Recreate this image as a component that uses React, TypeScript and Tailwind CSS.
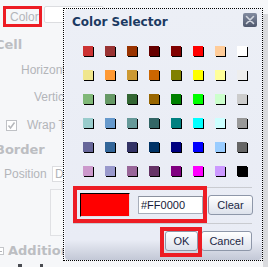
import React from 'react'

const swatches: string[][] = [
  ['bg-[#cc3333]', 'bg-[#993333]', 'bg-[#993300]', 'bg-[#660000]', 'bg-[#800000]', 'bg-[#ff0000]', 'bg-[#ffcc99]', 'bg-[#ffffff]'],
  ['bg-[#f0e68c]', 'bg-[#ff9933]', 'bg-[#cc9933]', 'bg-[#cc6600]', 'bg-[#808000]', 'bg-[#ffff00]', 'bg-[#ffff99]', 'bg-[#eeeeee]'],
  ['bg-[#80b878]', 'bg-[#669966]', 'bg-[#336633]', 'bg-[#996600]', 'bg-[#008000]', 'bg-[#00ff00]', 'bg-[#ccffcc]', 'bg-[#cccccc]'],
  ['bg-[#99cccc]', 'bg-[#6699cc]', 'bg-[#669999]', 'bg-[#336666]', 'bg-[#008080]', 'bg-[#00ffff]', 'bg-[#ccffff]', 'bg-[#999999]'],
  ['bg-[#666699]', 'bg-[#336699]', 'bg-[#333366]', 'bg-[#003366]', 'bg-[#000080]', 'bg-[#0000ff]', 'bg-[#99ccff]', 'bg-[#666666]'],
  ['bg-[#cc99cc]', 'bg-[#9999cc]', 'bg-[#996699]', 'bg-[#663366]', 'bg-[#800080]', 'bg-[#ff00ff]', 'bg-[#cc99ff]', 'bg-[#000000]'],
]

const btn =
  "flex items-center justify-center h-[20px] rounded-[3px] border border-[#8e97a9] bg-gradient-to-b from-[#ffffff] to-[#dde2ec] text-[11px] text-[#1c2744]"

const ColorSelector = () => {
  return (
    <div className="absolute left-[63px] top-[8px] w-[200px] h-[253px] border border-dotted border-black">
      <div className="flex flex-col h-full rounded-t-[5px] rounded-b-[4px] border-l border-[#f7f8fc] bg-gradient-to-b from-[#eceff6] via-[#e9ecf5] via-[92%] to-[#c3c8d6]">
        <div className="flex items-start justify-between h-[37px] pl-[7px] pr-[5px] pt-[4px]">
          <span className="mt-[2px] font-['DejaVu_Sans',sans-serif] font-bold text-[12px] leading-[14px] text-[#1b3a62]">Color Selector</span>
          <div className="flex items-center justify-center w-[14px] h-[14px] rounded-[2px] bg-gradient-to-b from-[#838ca0] to-[#4f586d]">
            <svg width="10" height="10" viewBox="0 0 10 10">
              <path d="M1.5 1.5 L8.5 8.5 M8.5 1.5 L1.5 8.5" stroke="#d3d7df" strokeWidth="1.6" strokeLinecap="round" />
            </svg>
          </div>
        </div>

        <div className="ml-[18px] grid grid-cols-[repeat(8,10px)] gap-x-[12px] gap-y-[14px]">
          {swatches.flat().map((c, i) => (
            <div key={i} className={`w-[10px] h-[10px] shadow-[1px_1px_0_#000] ${c}`} />
          ))}
        </div>

        <div className="mt-[11px] mx-[8px] mr-[10px] h-px bg-[#c9cbd0]" />

        <div className="flex items-center mt-[5px] ml-[15px]">
          <div className="relative flex items-center">
            <div className="w-[50px] h-[24px] bg-[#ff0000] border-t border-l border-black border-b border-r border-b-[#dfe1e6] border-r-[#dfe1e6]" />
            <div className="ml-[8px] flex items-center w-[65px] h-[18px] bg-white border border-[#a7adba] border-t-[#8b919e] pl-[2px] font-['Liberation_Sans',Arial,sans-serif] text-[11px] text-[#161a38]">
              #FF0000
            </div>
            <span className="absolute -left-[7px] -right-[4px] -top-[7px] -bottom-[6px] border-4 border-[#ed1c24]" />
          </div>
          <div className={`${btn} ml-[5px] w-[45px] h-[18px] font-['Liberation_Sans',Arial,sans-serif]`}>Clear</div>
        </div>

        <div className="mt-[6px] mx-[8px] mr-[10px] h-px bg-[#c9cbd0]" />

        <div className="flex justify-end gap-[3px] mt-[7px] pr-[10px] font-['Liberation_Sans',Arial,sans-serif]">
          <div className="relative">
            <div className={`${btn} w-[33px]`}>OK</div>
            <span className="absolute -left-[5px] -right-[4px] -top-[4px] -bottom-[6px] border-4 border-[#ed1c24]" />
          </div>
          <div className={`${btn} w-[51px]`}>Cancel</div>
        </div>
      </div>
    </div>
  )
}

const App = () => {
  const label = "font-['Liberation_Sans',Arial,sans-serif] text-[12px] leading-[14px] text-[#b3b5b9] whitespace-nowrap"
  const heading = "font-['DejaVu_Sans',sans-serif] font-bold text-[13px] leading-[16px] text-[#bcbec2] whitespace-nowrap"

  return (
    <div className="relative w-[268px] h-[267px] overflow-hidden bg-[#f6f7f9] flex">
      <div className="flex flex-col flex-1 min-w-0">
        <div className="flex items-start mt-[6px]">
          <div className={`ml-[3px] w-[39px] h-[21px] border-[3px] border-[#ed1c24] pl-[4px] flex items-center ${label}`}>Color</div>
          <div className="ml-[2px] w-[60px] h-[17px] bg-white border border-[#dcdde0] rounded-[2px]" />
        </div>

        <div className={`mt-[10px] -ml-[5px] ${heading}`}>Cell</div>
        <div className={`mt-[10px] pl-[21px] ${label}`}>Horizontal</div>
        <div className={`mt-[13px] pl-[34px] ${label}`}>Vertical</div>

        <div className="flex items-center mt-[14px] pl-[6px]">
          <div className="flex items-center justify-center w-[11px] h-[11px] border border-[#bfc1c5] bg-white">
            <svg width="9" height="9" viewBox="0 0 9 9">
              <path d="M1.5 4.5 L3.5 7 L7.5 1.5" stroke="#b5b7bb" strokeWidth="1.5" fill="none" />
            </svg>
          </div>
          <span className={`ml-[10px] ${label}`}>Wrap Text</span>
        </div>

        <div className={`mt-[10px] -ml-[5px] ${heading}`}>Border</div>

        <div className="flex items-center mt-[8px] pl-[4px]">
          <span className={`w-[48px] ${label}`}>Position</span>
          <div className={`w-[60px] h-[16px] bg-white border border-[#dcdde0] pl-[2px] flex items-center ${label}`}>Default</div>
        </div>

        <div className="mt-[7px] ml-[50px] w-[60px] h-[47px] bg-[#f8f9fa] border border-[#e0e1e4]" />

        <div className="flex items-center mt-[7px]">
          <div className="-ml-[4px] flex items-center justify-center w-[8px] h-[8px] border border-[#c3c5c9] bg-white">
            <div className="w-[4px] h-px bg-[#b3b5b9]" />
          </div>
          <span className={`ml-[4px] ${heading}`}>Additional</span>
        </div>

        <div className="flex mt-[5px]">
          <div className="ml-[18px] w-[4px] h-[3px] bg-[#4a4c52]" />
          <div className="ml-[18px] w-[3px] h-[3px] bg-[#4a4c52]" />
        </div>
      </div>
      <div className="w-[5px] mt-[14px] bg-[#d9dadd]" />

      <ColorSelector />
    </div>
  )
}

export default App
